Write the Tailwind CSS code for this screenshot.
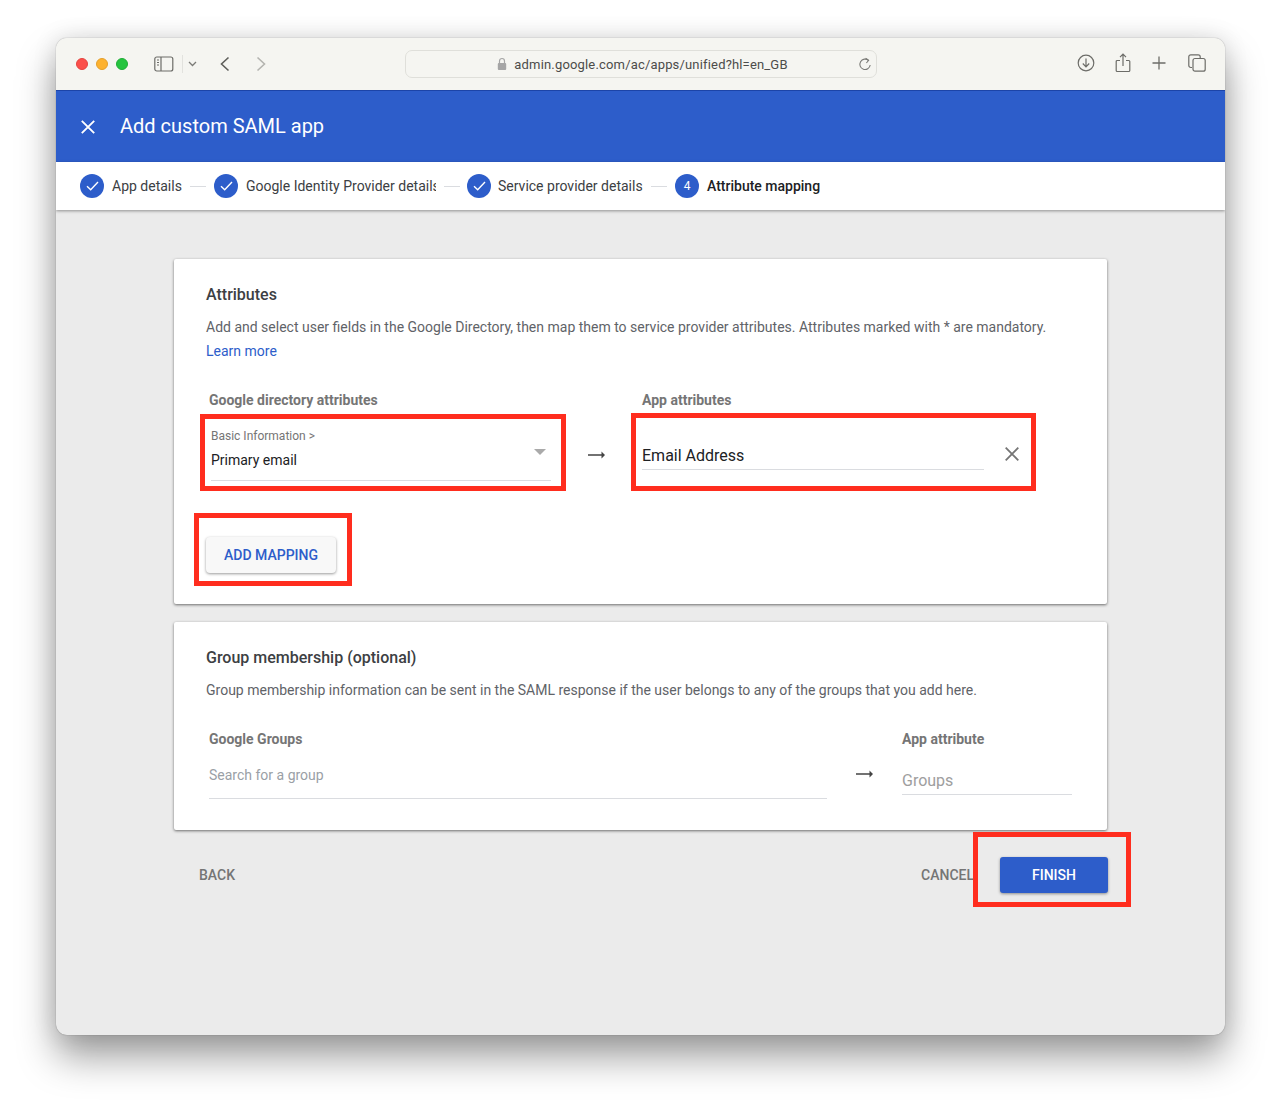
<!DOCTYPE html>
<html lang="en">
<head>
    <meta charset="UTF-8">
    <meta name="viewport" content="width=device-width, initial-scale=1.0">
    <title>Add custom SAML app</title>
    <script src="https://cdn.jsdelivr.net/npm/@tailwindcss/browser@4"></script>
</head>
<body class="bg-white font-['Roboto',sans-serif] overflow-hidden">
<div class="relative w-[1281px] h-[1109px] pl-[56px] pt-[38px]">
    <div class="w-[1169px] h-[997px] rounded-[11px] overflow-hidden flex flex-col bg-[#ebebeb] shadow-[0_22px_38px_rgba(0,0,0,0.38),0_0_1px_rgba(0,0,0,0.5),0_0_24px_rgba(0,0,0,0.12)]">

        <!-- browser toolbar -->
        <div class="h-[53px] shrink-0 bg-[#f5f5f1] border-b border-[#1c44a8] flex items-center relative">
            <div class="flex gap-[8px] ml-[20px]">
                <span class="w-3 h-3 rounded-full bg-[#fb4f4a] border border-[#e5443f]"></span>
                <span class="w-3 h-3 rounded-full bg-[#fdb22f] border border-[#e59f2a]"></span>
                <span class="w-3 h-3 rounded-full bg-[#25c43f] border border-[#20ad37]"></span>
            </div>
            <svg class="ml-[26px]" width="20" height="16" viewBox="0 0 20 16" fill="none" stroke="#6c6c68" stroke-width="1.2"><rect x="0.8" y="1" width="18" height="14" rx="2"/><path d="M7 1v14"/><path d="M3 4h2M3 6.5h2M3 9h2" /></svg>
            <span class="w-px h-[18px] bg-[#e2e2de] ml-[8px]"></span>
            <svg class="ml-[5px]" width="9" height="6" viewBox="0 0 9 6" fill="none" stroke="#7b7b77" stroke-width="1.3"><path d="M1 1l3.5 3.5L8 1"/></svg>
            <svg class="ml-[22px]" width="12" height="16" viewBox="0 0 12 16" fill="none" stroke="#5f5f5b" stroke-width="1.6"><path d="M9.5 1.5L2.5 8l7 6.5"/></svg>
            <svg class="ml-[24px]" width="12" height="16" viewBox="0 0 12 16" fill="none" stroke="#b4b4b0" stroke-width="1.6"><path d="M2.5 1.5l7 6.5-7 6.5"/></svg>

            <div class="absolute left-[349px] top-[12px] w-[472px] h-[28px] rounded-[7px] border border-[#dfdfda] flex items-center justify-center pl-[3px]">
                <svg class="mr-[7px]" width="10" height="14" viewBox="0 0 10 14"><path d="M2.5 6V4a2.5 2.5 0 0 1 5 0v2" fill="none" stroke="#a5a5a5" stroke-width="1.2"/><rect x="0.8" y="6" width="8.4" height="7" rx="1" fill="#a5a5a5"/></svg>
                <span class="pt-[1px] text-[13px] text-[#4c4c4a] tracking-[0.17px]">admin.google.com/ac/apps/unified?hl=en_GB</span>
                <svg class="absolute right-[4px] top-[6px]" width="14" height="15" viewBox="0 0 14 15" fill="none" stroke="#7b7b77" stroke-width="1.1"><path d="M10.5 3.4A5.2 5.2 0 1 0 12.2 8"/><path d="M7.6 1.2l3 2.2-2.2 2.6"/></svg>
            </div>

            <div class="absolute right-[19px] top-[15px] flex items-center">
                <svg width="18" height="18" viewBox="0 0 18 18" fill="none" stroke="#6c6c68" stroke-width="1.2"><circle cx="9" cy="9" r="7.8"/><path d="M9 4.5v8M5.8 9.5L9 12.8l3.2-3.3"/></svg>
                <svg class="ml-[20px]" width="16" height="20" viewBox="0 0 16 20" fill="none" stroke="#6c6c68" stroke-width="1.2"><path d="M5 7.5H2.2a1 1 0 0 0-1 1v9a1 1 0 0 0 1 1h11.6a1 1 0 0 0 1-1v-9a1 1 0 0 0-1-1H11"/><path d="M8 13V1.5M5 4.2l3-3 3 3"/></svg>
                <svg class="ml-[21px]" width="14" height="14" viewBox="0 0 14 14" fill="none" stroke="#6c6c68" stroke-width="1.3"><path d="M7 0.5v13M0.5 7h13"/></svg>
                <svg class="ml-[22px]" width="18" height="18" viewBox="0 0 18 18" fill="none" stroke="#6c6c68" stroke-width="1.2"><path d="M4 13.5H2.8a2 2 0 0 1-2-2V2.8a2 2 0 0 1 2-2h7.4a2 2 0 0 1 2 2V4"/><rect x="5" y="4.5" width="12.2" height="12.7" rx="2"/></svg>
            </div>
        </div>

        <!-- app header -->
        <div class="h-[71px] shrink-0 bg-[#2d5dca] flex items-center text-white">
            <svg class="ml-[25px]" width="14" height="14" viewBox="0 0 14 14" fill="none" stroke="#fff" stroke-width="1.9"><path d="M0.8 0.8l12.4 12.4M13.2 0.8L0.8 13.2"/></svg>
            <h1 class="ml-[25px] mb-[2px] text-[20px] leading-none">Add custom SAML app</h1>
        </div>

        <!-- stepper -->
        <div class="h-[48px] shrink-0 bg-white flex items-center pl-[24px] text-[14px] text-[#3c4043] shadow-[0_1px_3px_rgba(0,0,0,0.4)] relative">
            <span class="w-6 h-6 rounded-full bg-[#2d5dca] flex items-center justify-center"><svg width="13" height="10" viewBox="0 0 13 10" fill="none" stroke="#fff" stroke-width="1.4"><path d="M1 5.2l3.7 3.6L12 1"/></svg></span>
            <span class="ml-[8px] w-[70px] whitespace-nowrap">App details</span>
            <span class="ml-[8px] w-[16px] h-px bg-[#dadce0]"></span>
            <span class="ml-[8px] w-6 h-6 rounded-full bg-[#2d5dca] flex items-center justify-center"><svg width="13" height="10" viewBox="0 0 13 10" fill="none" stroke="#fff" stroke-width="1.4"><path d="M1 5.2l3.7 3.6L12 1"/></svg></span>
            <span class="ml-[8px] w-[190px] whitespace-nowrap overflow-hidden">Google Identity Provider details</span>
            <span class="ml-[8px] w-[16px] h-px bg-[#dadce0]"></span>
            <span class="ml-[7px] w-6 h-6 rounded-full bg-[#2d5dca] flex items-center justify-center"><svg width="13" height="10" viewBox="0 0 13 10" fill="none" stroke="#fff" stroke-width="1.4"><path d="M1 5.2l3.7 3.6L12 1"/></svg></span>
            <span class="ml-[7px] w-[145px] whitespace-nowrap">Service provider details</span>
            <span class="ml-[8px] w-[16px] h-px bg-[#dadce0]"></span>
            <span class="ml-[8px] w-6 h-6 rounded-full bg-[#2d5dca] text-white text-[12px] flex items-center justify-center">4</span>
            <span class="ml-[8px] whitespace-nowrap font-medium text-[#202124]">Attribute mapping</span>
        </div>

        <!-- content -->
        <div class="flex-1 pl-[118px] pt-[49px]">
            <section class="w-[933px] h-[345px] bg-white rounded-[2px] shadow-[0_1px_3px_rgba(0,0,0,0.55)] pl-[32px] pt-[26px]">
                <h2 class="text-[16px] leading-[20px] font-medium text-[#3c4043]">Attributes</h2>
                <p class="mt-[10px] text-[14px] leading-[24px] text-[#5f6368] whitespace-nowrap">Add and select user fields in the Google Directory, then map them to service provider attributes. Attributes marked with * are mandatory.</p>
                <a class="block text-[14px] leading-[24px] text-[#2d5dca]">Learn more</a>

                <div class="flex mt-[29px] pl-[3px]">
                    <div class="w-[342px]">
                        <div class="text-[14px] leading-[16px] font-bold text-[#757575]">Google directory attributes</div>
                        <div class="relative mt-[20px] ml-[2px] h-[53px] border-b border-[#dadce0]">
                            <div class="text-[12px] leading-[16px] text-[#757575]">Basic Information &gt;</div>
                            <div class="mt-[6px] text-[14px] leading-[20px] text-[#202124]">Primary email</div>
                            <span class="absolute right-[5px] top-[21px] w-0 h-0 border-x-[6px] border-x-transparent border-t-[6px] border-t-[#aaaaaa]"></span>
                        </div>
                    </div>
                    <svg class="ml-[37px] mt-[59px]" width="17" height="8" viewBox="0 0 17 8" fill="#444"><path d="M0 3.2h13.5V0.4L17 4l-3.5 3.6V4.8H0z"/></svg>
                    <div class="ml-[37px] w-[380px]">
                        <div class="text-[14px] leading-[16px] font-bold text-[#757575]">App attributes</div>
                        <div class="relative mt-[36px] w-[342px] h-[26px] border-b border-[#dadce0] text-[16px] leading-[24px] text-[#202124]">
                            Email Address
                            <svg class="absolute left-[363px] top-[3px]" width="14" height="14" viewBox="0 0 14 14" fill="none" stroke="#757575" stroke-width="1.8"><path d="M0.7 0.7l12.6 12.6M13.3 0.7L0.7 13.3"/></svg>
                        </div>
                    </div>
                </div>

                <button class="mt-[56px] w-[130px] h-[36px] rounded-[4px] bg-[#f8f8f8] text-[14px] font-medium text-[#2d5dca] shadow-[0_1px_3px_rgba(0,0,0,0.4)]">ADD MAPPING</button>
            </section>

            <section class="mt-[18px] w-[933px] h-[208px] bg-white rounded-[2px] shadow-[0_1px_3px_rgba(0,0,0,0.55)] pl-[32px] pt-[26px]">
                <h2 class="text-[16px] leading-[20px] font-medium text-[#3c4043]">Group membership (optional)</h2>
                <p class="mt-[10px] text-[14px] leading-[24px] text-[#5f6368] whitespace-nowrap">Group membership information can be sent in the SAML response if the user belongs to any of the groups that you add here.</p>
                <div class="flex mt-[29px] pl-[3px]">
                    <div class="w-[618px]">
                        <div class="text-[14px] leading-[16px] font-bold text-[#757575]">Google Groups</div>
                        <div class="mt-[18px] h-[34px] border-b border-[#dadce0] text-[14px] leading-[20px] text-[#9aa0a6]">Search for a group</div>
                    </div>
                    <svg class="ml-[29px] mt-[39px]" width="17" height="8" viewBox="0 0 17 8" fill="#444"><path d="M0 3.2h13.5V0.4L17 4l-3.5 3.6V4.8H0z"/></svg>
                    <div class="ml-[29px] w-[170px]">
                        <div class="text-[14px] leading-[16px] font-bold text-[#757575]">App attribute</div>
                        <div class="mt-[22px] h-[26px] border-b border-[#dadce0] text-[16px] leading-[24px] text-[#9e9e9e]">Groups</div>
                    </div>
                </div>
            </section>

            <div class="mt-[27px] w-[934px] flex items-center text-[14px] font-medium text-[#757575]">
                <span class="ml-[25px]">BACK</span>
                <span class="ml-auto">CANCEL</span>
                <button class="ml-[26px] w-[108px] h-[36px] rounded-[3px] bg-[#2d5dca] text-white font-medium shadow-[0_1px_3px_rgba(0,0,0,0.4)]">FINISH</button>
            </div>
        </div>
    </div>

    <!-- red annotation boxes over the screenshot -->
    <div class="absolute left-[200px] top-[414px] w-[366px] h-[77px] border-[5px] border-[#ff2d1e]"></div>
    <div class="absolute left-[631px] top-[413px] w-[405px] h-[78px] border-[5px] border-[#ff2d1e]"></div>
    <div class="absolute left-[194px] top-[513px] w-[158px] h-[73px] border-[5px] border-[#ff2d1e]"></div>
    <div class="absolute left-[973px] top-[832px] w-[158px] h-[75px] border-[5px] border-[#ff2d1e]"></div>
</div>
</body>
</html>
